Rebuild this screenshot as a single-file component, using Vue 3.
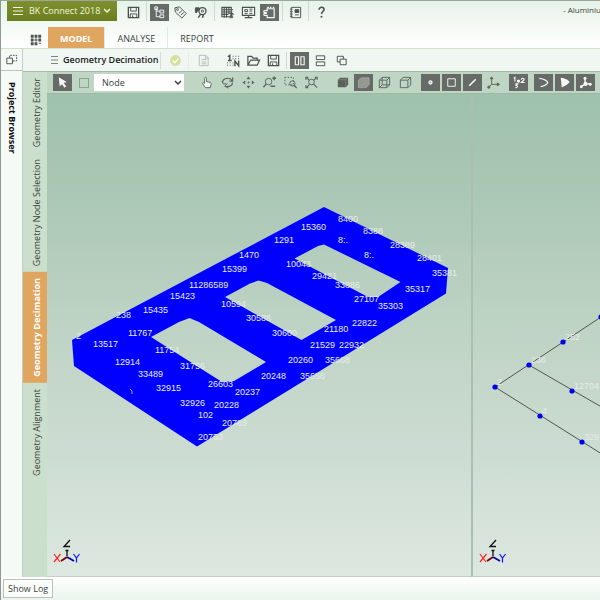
<script setup>
import { ref } from 'vue'

const icons = {
  save: '<path d="M2.500 2.500h11v11h-11z" stroke-width="1.400"/><path d="M5 2.500v4h6v-4M4.500 13.500V9.500h7v4M7 11v2"/>',
  tree: '<path d="M4.500 3v9.500h4M4.500 6.500h4"/><path d="M3 2h3v3H3zM8.500 5.500h4v3h-4zM8.500 10.500h4v3h-4z"/>',
  tag: '<path d="M2 3l5-1 7 7-4.500 5L2.500 7.500z"/><circle cx="4.800" cy="4.800" r="1"/><path d="M6.500 8.500l3-2.500M8.500 10.500l3-2.500"/>',
  find: '<path d="M1.500 3h4v2.500H4L3 8H1.500z" fill="currentColor"/><circle cx="9" cy="6.500" r="3.800" stroke-width="1.400"/><circle cx="9" cy="6.500" r="1.200"/><path d="M7 10l-2.500 3.500M10 10.500l-1 3" stroke-width="1.600"/>',
  table: '<path d="M2 2.500h10v10H2zM2 5h12M2 7.500h11M2 10h7M4.500 2.500v11M7 2.500v11M9.500 2.500v7M12 2.500v5" stroke-width="1.200"/><path d="M10 9h4v1.500h-3V12h2.500v1.500H10" />',
  monitor: '<path d="M1.500 2.500h13v8.500h-13zM6 13.500h4M8 11v2.500M4 13.500h8" stroke-width="1.200"/><path d="M4 5h3v2H4zM9 4.500h3M9 6.500h3M4 9h3M9 9h3"/>',
  puzzle: '<path d="M5.500 6V4H13v9.500H5.500V11H3c-1.500 0-1.500-2 0-2h1.500V8H3c-1.500 0-1.500-2 0-2z" stroke-width="1.300"/><path d="M5.500 2.500h2M8.500 2.500h1.500M11.500 2.500H13" stroke-width="1.500"/>',
  notebook: '<path d="M3.500 2.500h10v11h-10z"/><path d="M7.500 5h4v3h-4z" fill="currentColor"/><path d="M2 4.500h3M2 7h3M2 9.500h3M2 12h3M7.500 10.500h4"/>',
  help: '<path d="M5.500 5c0-3.500 5.500-3.300 5.200 0C10.500 7 8 7 8 9.500" stroke-width="1.700"/><circle cx="8" cy="12.500" r="1.100" fill="currentColor" stroke="none"/>',
  apps: '<path d="M3 3h3v3H3zM7 3h3v3H7zM11 3h3v3h-3zM3 7h3v3H3zM11 7h3v3h-3zM3 11h3v3H3zM7 11h3v3H7z" fill="currentColor" stroke="none"/><path d="M7.500 7.500h2v2h-2zM11.500 12H14"/>',
  dock: '<path d="M3 6.500h6v6H3z"/><path d="M6 6V3.500h7.500v6H9.500" stroke-dasharray="2 1"/>',
  check: '<circle cx="8" cy="8" r="5.800" fill="#d4dfa0" stroke="none"/><path d="M5 8l2.300 2.300L11 6" stroke="#fbfff0" stroke-width="1.500"/>',
  doc: '<path d="M3.500 2.500h7l2.500 2.500v8.500H3.500zM6 7h5M6 9.500h5M6 11.500h5M10 2.500v3h3"/>',
  renumber: '<path d="M2 4l2-1.500V8M2 8h4" stroke-width="1.500"/><path d="M9.500 14V8.500l4 5V8" stroke-width="1.500"/><path d="M7 3.500h8M7 6h8M1 10.500h7M1 13h7" stroke-dasharray="1 2"/>',
  open: '<path d="M2 13V3.500h4l1.500 2H12V7.500M2 13l3-5.500h9.500L12 13z" stroke-width="1.300"/>',
  columns: '<path d="M3.500 4h3.500v8.500H3.500zM9.500 4h3.500v8.500H9.500z" stroke-width="1.200"/>',
  rows: '<path d="M3.500 3h9v4h-9zM3.500 9.500h9v4h-9z"/>',
  copies: '<path d="M3.500 3.500h6.500v6H3.500z"/><path d="M6.500 6.500H13v6H6.500z" fill="#eef4ef"/>',
  cursor: '<path d="M4 2.500l8.500 5-3.300 1 2.800 3.500-1.800 1.500-2.800-3.700L5 12z" fill="currentColor" stroke="none"/>',
  hand: '<path d="M6 9V3.500c0-1.500 2-1.500 2 0V7l4 1c1 .3 1 1 .8 2L12 13.500H7L4 9.500c-.7-1 .5-2 2-.5z" fill="#f4f9f5"/>',
  rotate: '<path d="M3 8C2 4.500 8 2 11.500 4.500L13 6M13.500 2.500V6.500H10M13 8c1 2.500-3 5.500-7 4" stroke-width="1.200"/><path d="M2 6.500l1.500 3h3.500M8 9l-3 3 4 2" />',
  move: '<path d="M8 1.500l2.200 3H5.800zM8 14.500l2.200-3H5.800zM1.500 8l3-2.200v4.400zM14.500 8l-3-2.200v4.400z" fill="currentColor" stroke="none"/><path d="M8 7v2M7 8h2"/>',
  zoomin: '<circle cx="7" cy="7" r="3.500"/><path d="M4.500 9.500l-3 3.500M11 3.500h4M13 1.500v4M9 12h5" stroke-width="1.500"/>',
  zoombox: '<path d="M2 2.500h9v8H2z" stroke-dasharray="1.500 1.500"/><circle cx="10" cy="9" r="2.800"/><path d="M12 11l2.500 3" stroke-width="1.500"/>',
  zoomfit: '<circle cx="8" cy="7.500" r="3"/><path d="M10 9.500l4 4M2 5V2.500h2.500M11.500 2.500H14V5M2 11v2.500h2.500M3 3l2.500 2.500M13 3l-2.500 2.500M3 13l3-3" stroke-width="1.200"/>',
  solid: '<path d="M3 5l2.500-2H14v7.500L11.500 13H3z" fill="#596159" stroke="none"/><path d="M3 5h8.500L14 3M11.500 5v8" stroke="#8a938b" stroke-width=".7"/>',
  shaded: '<path d="M2.500 5.500L5.500 3H14v7l-3 3.500H2.500z" fill="#949994" stroke="#a8aca8" stroke-width=".7"/>',
  wire: '<path d="M2.500 5.500h8v8h-8zM5.500 2.500h8v8h-8zM2.500 5.500l3-3M10.500 5.500l3-3M10.500 13.500l3-3M2.500 13.500l3-3"/>',
  cube: '<path d="M2.500 5.500h8v8h-8zM2.500 5.500l3-3h8v8l-3 3M10.500 5.500l3-3"/>',
  point: '<circle cx="8" cy="8" r="1.700" fill="#b8beb8" stroke-width="1.200"/>',
  square: '<path d="M4 4h8v8H4z"/>',
  line: '<path d="M4.500 11.500l7-7" stroke-width="1.700"/>',
  axes: '<path d="M6 10V3M6 10h7M6 10l-3.500 3" /><path d="M4.500 4L6 2l1.500 2zM12 8.500l2.500 1.500L12 11.500z" fill="currentColor"/><circle cx="3" cy="13" r="1.200" fill="currentColor"/>',
  numbers: '<path d="M3 3.500L4.200 2.500V7M11 5c0-2 3-2 3 0L11 8h3.500M4.500 9.500H7L5.500 11c2.500 0 1.500 3-1 2.500" stroke-width="1.200"/><circle cx="8" cy="6.500" r="1.800" fill="currentColor" stroke="none"/>',
  curve: '<path d="M3.500 3.500c4 .5 8 1.500 9 4.500-1 3-5 4-7.500 4.500" stroke-width="1.300"/>',
  surface: '<path d="M4 3c4 .5 8 2.500 9.500 4.500C11.500 10 8 12.500 5 13z" fill="currentColor" stroke="none"/>',
  axesbold: '<path d="M7.500 9V3M7.500 9.500H13M7.500 9.500l-4 3" stroke-width="1.500"/><circle cx="7.500" cy="3.500" r="1.600" fill="currentColor" stroke="none"/><circle cx="13" cy="9.800" r="1.600" fill="currentColor" stroke="none"/><circle cx="3.500" cy="12.500" r="1.500" fill="currentColor" stroke="none"/><circle cx="8" cy="9.500" r="2.200" fill="currentColor" stroke="none"/>'
}

const mainTools = [
  [{ icon: 'save', label: 'Save' }],
  [{ icon: 'tree', label: 'Browser', on: true }, { icon: 'tag', label: 'Tags' }, { icon: 'find', label: 'Search' }],
  [{ icon: 'table', label: 'Matrix' }, { icon: 'monitor', label: 'Display' }, { icon: 'puzzle', label: 'Components', on: true }],
  [{ icon: 'notebook', label: 'Notebook' }],
  [{ icon: 'help', label: 'Help' }]
]

const viewTools = [
  [
    { icon: 'hand', label: 'Pan' }, { icon: 'rotate', label: 'Rotate' }, { icon: 'move', label: 'Move' },
    { icon: 'zoomin', label: 'Zoom' }, { icon: 'zoombox', label: 'Zoom to area' }, { icon: 'zoomfit', label: 'Zoom to fit' }
  ],
  [
    { icon: 'solid', label: 'Solid' }, { icon: 'shaded', label: 'Shaded', on: true },
    { icon: 'wire', label: 'Wireframe' }, { icon: 'cube', label: 'Hidden line' }
  ],
  [
    { icon: 'point', label: 'Nodes', on: true }, { icon: 'square', label: 'Faces', on: true },
    { icon: 'line', label: 'Edges', on: true }, { icon: 'axes', label: 'Axes' }
  ],
  [{ icon: 'numbers', label: 'Node numbers', on: true }],
  [
    { icon: 'curve', label: 'Curves', on: true }, { icon: 'surface', label: 'Surfaces', on: true },
    { icon: 'axesbold', label: 'Local axes', on: true }
  ]
]

const tabs = ['MODEL', 'ANALYSE', 'REPORT']
const sideTabs = ['Geometry Editor', 'Geometry Node Selection', 'Geometry Decimation', 'Geometry Alignment']
const activeTab = ref('MODEL')
const activeSide = ref('Geometry Decimation')
const target = ref('Node')

const meshLabels = [
  [338, 222, '8400'], [274, 243, '1291'], [301, 230, '15360'], [363, 234, '8388'], [338, 243, '8:.'],
  [364, 258, '8:.'], [390, 248, '28389'], [417, 261, '28401'], [432, 276, '35381'], [405, 292, '35317'],
  [378, 309, '35303'], [354, 302, '27107'], [335, 288, '33886'], [312, 279, '29421'], [286, 267, '10043'],
  [239, 258, '1470'], [222, 272, '15399'], [189, 288, '11286589'], [170, 299, '15423'], [143, 313, '15435'],
  [116, 318, '238'], [128, 336, '11767'], [76, 339, '2'], [93, 347, '13517'], [155, 353, '11754'],
  [115, 365, '12914'], [180, 369, '31756'], [138, 377, '33489'], [208, 387, '26603'], [156, 391, '32915'],
  [235, 395, '20237'], [180, 406, '32926'], [214, 408, '20228'], [198, 418, '102'], [222, 426, '20783'],
  [198, 440, '20753'], [221, 307, '10594'], [246, 321, '30588'], [272, 336, '30600'], [324, 332, '21180'],
  [352, 326, '22822'], [310, 348, '21529'], [339, 348, '22932'], [288, 363, '20260'], [325, 363, '35668'],
  [261, 379, '20248'], [300, 379, '35656']
]

const nodes = [
  [495, 387, '2'], [529, 365, '236'], [563, 342, '252'], [601, 317, ''],
  [572, 391, '12704'], [540, 416, '4'], [582, 442, '329']
]
</script>

<template>
  <div class="app">
    <header class="head">
      <div class="titlebar">
        <button class="menu" type="button">
          <svg class="bars" viewBox="0 0 10 10" aria-hidden="true"><path d="M0 1.500h10M0 5h10M0 8.500h10" /></svg>
          <span>BK Connect 2018</span>
          <svg class="chev" viewBox="0 0 8 6" aria-hidden="true"><path d="M1 1l3 3 3-3" /></svg>
        </button>
        <div v-for="(group, g) in mainTools" :key="g" class="group ruled">
          <button v-for="t in group" :key="t.icon" type="button" class="tool" :class="{ on: t.on }" :aria-label="t.label">
            <svg viewBox="0 0 16 16" v-html="icons[t.icon]"></svg>
          </button>
        </div>
        <span class="doc-title">- Aluminiu</span>
      </div>
      <nav class="tabs">
        <button class="tool apps" type="button" aria-label="Applications">
          <svg viewBox="0 0 16 16" v-html="icons.apps"></svg>
        </button>
        <button
          v-for="t in tabs" :key="t" type="button" class="tab" :class="{ active: activeTab === t }"
          @click="activeTab = t"
        >{{ t }}</button>
      </nav>
    </header>

    <main class="body">
      <aside class="project">
        <button class="tool" type="button" aria-label="Undock">
          <svg viewBox="0 0 16 16" v-html="icons.dock"></svg>
        </button>
        <span class="project-name">Project Browser</span>
      </aside>

      <div class="work">
        <div class="taskbar">
          <svg class="grip" viewBox="0 0 8 8" aria-hidden="true"><path d="M0 .5h7M0 4h7M0 7.500h7" /></svg>
          <h1>Geometry Decimation</h1>
          <div class="group step"><button class="tool" type="button" aria-label="Apply"><svg viewBox="0 0 16 16" v-html="icons.check"></svg></button></div>
          <div class="group step faint"><button class="tool" type="button" aria-label="Report"><svg viewBox="0 0 16 16" v-html="icons.doc"></svg></button></div>
          <div class="group files">
            <button class="tool" type="button" aria-label="Renumber"><svg viewBox="0 0 16 16" v-html="icons.renumber"></svg></button>
            <button class="tool" type="button" aria-label="Open"><svg viewBox="0 0 16 16" v-html="icons.open"></svg></button>
            <button class="tool" type="button" aria-label="Save geometry"><svg viewBox="0 0 16 16" v-html="icons.save"></svg></button>
          </div>
          <div class="group ruled">
            <button class="tool on" type="button" aria-label="Side by side"><svg viewBox="0 0 16 16" v-html="icons.columns"></svg></button>
            <button class="tool" type="button" aria-label="Stacked"><svg viewBox="0 0 16 16" v-html="icons.rows"></svg></button>
            <button class="tool" type="button" aria-label="Overlapped"><svg viewBox="0 0 16 16" v-html="icons.copies"></svg></button>
          </div>
        </div>

        <div class="stage">
          <nav class="side">
            <button
              v-for="s in sideTabs" :key="s" type="button" class="side-tab" :class="{ active: activeSide === s }"
              @click="activeSide = s"
            >{{ s }}</button>
          </nav>

          <section class="editor">
            <div class="viewbar">
              <button class="tool on" type="button" aria-label="Select"><svg viewBox="0 0 16 16" v-html="icons.cursor"></svg></button>
              <input class="tick" type="checkbox" aria-label="Area selection">
              <div class="pick">
                <select v-model="target" aria-label="Selection type">
                  <option>Node</option>
                  <option>Element</option>
                </select>
                <svg class="chev" viewBox="0 0 8 6" aria-hidden="true"><path d="M1 1l3 3 3-3" /></svg>
              </div>
              <div v-for="(group, g) in viewTools" :key="g" class="group">
                <button v-for="t in group" :key="t.icon" type="button" class="tool" :class="{ on: t.on }" :aria-label="t.label">
                  <svg viewBox="0 0 16 16" v-html="icons[t.icon]"></svg>
                </button>
              </div>
            </div>

            <div class="panes">
              <div v-for="pane in ['mesh', 'nodes']" :key="pane" class="pane">
                <svg v-if="pane === 'mesh'" class="scene" viewBox="47 95 424 480">
                  <path
                    class="plate" fill-rule="evenodd"
                    d="M324 207L448 268 446 293.500 197 446.500 74 366 72 340Z
                       M324 244.500L400.500 282 378 297 368 297 294.500 258.500 318 246Z
                       M258.500 280.500L267 283 336 320 301.500 340 225 297 250 283.500Z
                       M189.500 318L199 322 266 362 234 381 222 382 151 337 179 322Z"
                  />
                  <text v-for="(l, i) in meshLabels" :key="i" :x="l[0]" :y="l[1]">{{ l[2] }}</text>
                  <path class="mark" d="M130 389l2 2v3" />
                </svg>
                <svg v-else class="scene" viewBox="473 95 127 480">
                  <path class="edge" d="M601 317L495 387 605 456M529 365L605 409" />
                  <g v-for="(n, i) in nodes" :key="i">
                    <circle class="node" :cx="n[0]" :cy="n[1]" r="2.600" />
                    <text :x="n[0] + 2" :y="n[1] - 2">{{ n[2] }}</text>
                  </g>
                </svg>
                <svg class="triad" viewBox="0 0 28 26" aria-label="Axis orientation">
                  <path d="M17 1l-6 6.500h6M14 17v-6M12.500 11.500h3" stroke="#111" stroke-width="1.300" />
                  <path d="M14 18l-6 4" stroke="#700" stroke-width="1.800" />
                  <path d="M1 15l6 8M7.500 15L1 23" stroke="#f22" stroke-width="1.200" />
                  <path d="M14 18l7 4" stroke="#00a" stroke-width="1.800" />
                  <path d="M20.500 15l3 4 3-4M23.500 19v4.500" stroke="#11f" stroke-width="1.200" />
                </svg>
              </div>
            </div>
          </section>
        </div>
      </div>
    </main>

    <footer class="foot"><button type="button" class="log">Show Log</button></footer>
  </div>
</template>

<style>
body {
  margin: 0;
  background: #f2f8f3;
}
</style>

<style scoped>
.app {
  display: flex;
  flex-direction: column;
  min-height: 100vh;
  box-sizing: border-box;
  overflow: hidden;
  border-left: 1px solid #8f9b91;
  font-family: "Open Sans", "Noto Sans", sans-serif;
  font-size: 9px;
  line-height: 14px;
  color: #3c423d;
}
button,
select {
  font: inherit;
  color: inherit;
  margin: 0;
  padding: 0;
  border: 0;
  background: none;
}
svg {
  display: block;
  fill: none;
  stroke: currentColor;
}
.head {
  border-top: 1px solid #9aa89c;
  border-bottom: 1px solid #d3dfd3;
  background: linear-gradient(#e6f3e8, #fff);
}
.titlebar {
  display: flex;
  align-items: flex-start;
  padding-left: 6px;
  height: 26px;
}
.menu {
  display: flex;
  align-items: center;
  flex: none;
  width: 110px;
  height: 20px;
  padding: 0 6px;
  background: linear-gradient(#7e902e, #6b7e20);
  color: #f1f5dc;
  white-space: nowrap;
  box-sizing: border-box;
}
.menu .bars {
  width: 10px;
  height: 10px;
  margin-right: 6px;
}
.chev {
  width: 8px;
  height: 6px;
  stroke-width: 1.500;
}
.menu .chev {
  margin-left: auto;
}
.group {
  display: flex;
  flex: none;
  gap: 2px;
}
.tool {
  display: grid;
  place-items: center;
  flex: none;
  width: 19px;
  height: 17px;
  color: #4b514c;
}
.tool svg {
  width: 15px;
  height: 15px;
}
.tool.on {
  background: #666b67;
  color: #f5f8f5;
}
.titlebar .group {
  padding: 3px 3px 0;
}
.titlebar .menu + .group {
  padding-left: 7px;
}
.ruled + .ruled {
  border-left: 1px solid #ced9cf;
}
.doc-title {
  margin-left: auto;
  width: 37px;
  padding-top: 2px;
  font-size: 8px;
  white-space: nowrap;
}
.tabs {
  display: flex;
  height: 21px;
  padding-left: 25px;
}
.apps {
  height: 24px;
  margin-right: 3px;
}
.tab {
  padding: 3px 12px 0;
  border-right: 1px solid #e2ebe3;
}
.tab:last-child {
  border-right: 0;
}
.tab.active {
  background: #e0a65f;
  color: #fff;
  font-weight: 700;
}
.body {
  display: flex;
  flex: 1;
}
.project {
  display: flex;
  flex-direction: column;
  align-items: center;
  flex: none;
  width: 21px;
  border-right: 1px solid #c3cfc5;
  background: #f6faf7;
}
.project .tool {
  width: 100%;
  height: 22px;
  border-bottom: 1px solid #b8c6bb;
}
.project-name {
  margin-top: 11px;
  writing-mode: vertical-rl;
  font-weight: 700;
  color: #111;
}
.work {
  display: flex;
  flex-direction: column;
  flex: 1;
  min-width: 0;
}
.taskbar {
  display: flex;
  align-items: center;
  height: 22px;
  padding-left: 28px;
  background: #f0f6f1;
}
.grip {
  width: 8px;
  height: 8px;
  margin-right: 4px;
  color: #7d857e;
}
h1 {
  flex: none;
  min-width: 97px;
  margin: 0;
  font-size: 9px;
  line-height: 14px;
  font-weight: 600;
  color: #222;
  white-space: nowrap;
}
.step {
  padding: 0 3px 0 5px;
  border-left: 1px solid #d5ded6;
}
.faint {
  opacity: 0.35;
}
.files {
  gap: 1px;
  padding: 0 3px 0 8px;
}
.files + .ruled {
  padding-left: 3px;
  border-left: 1px solid #ced9cf;
}
.stage {
  display: flex;
  flex: 1;
}
.side {
  display: flex;
  flex-direction: column;
  flex: none;
  width: 24px;
  background: #cbdfcd;
  border-top: 1px solid #a9bfae;
  box-sizing: border-box;
}
.side-tab {
  display: flex;
  align-items: center;
  width: 24px;
  padding: 6px 3px 6px 0;
  writing-mode: vertical-rl;
  transform: rotate(180deg);
  white-space: nowrap;
}
.side-tab.active {
  background: #e0a65f;
  color: #fff;
  font-weight: 700;
}
.editor {
  display: flex;
  flex-direction: column;
  flex: 1;
  min-width: 0;
}
.viewbar {
  display: flex;
  align-items: center;
  height: 21px;
  padding-left: 6px;
  background: #bfd6c5;
  border-top: 1px solid #a3b9a8;
  border-bottom: 1px solid #9db8a5;
}
.viewbar .tool:not(.on) {
  color: #5b665d;
}
.tick {
  appearance: none;
  width: 10px;
  height: 10px;
  margin: 0 5px 0 7px;
  border: 1px solid #8ba391;
}
.pick {
  position: relative;
  flex: none;
  width: 90px;
  margin-right: 1px;
}
.pick select {
  appearance: none;
  display: block;
  width: 100%;
  height: 17px;
  padding-left: 8px;
  background: #fdfefd;
}
.pick .chev {
  position: absolute;
  right: 2px;
  top: 6px;
}
.viewbar .group {
  margin-left: 6px;
}
.viewbar .pick + .group,
.viewbar .pick + .group + .group {
  margin-left: 12px;
}
.panes {
  display: grid;
  grid-template-columns: 424fr 129fr;
  flex: 1;
  background: linear-gradient(#9ec2ab, #a9c6b3 18%, #bcd2c3 45%, #cddcd2 75%, #dde8e0);
}
.pane {
  position: relative;
  min-width: 0;
  border-bottom: 1px solid #c3cfc5;
}
.pane + .pane {
  border-left: 2px solid #aabfb0;
}
.scene {
  width: 100%;
  height: 100%;
}
.scene text {
  font-family: "Liberation Sans", sans-serif;
  font-size: 9px;
  fill: #e6ece8;
  stroke: none;
}
.plate {
  fill: #00f;
  stroke: none;
}
.mark {
  stroke: #9ab4ff;
}
.edge {
  stroke: #4e5750;
}
.node {
  fill: #00e;
  stroke: none;
}
.triad {
  position: absolute;
  left: 6px;
  bottom: 11px;
  width: 28px;
  height: 26px;
}
.foot {
  display: flex;
  padding: 2px;
  background: linear-gradient(#fff, #eaf4ec);
}
.log {
  height: 19px;
  padding: 0 4px;
  border: 1px solid #b9c3ba;
  background: #fbfdfb;
}
</style>
